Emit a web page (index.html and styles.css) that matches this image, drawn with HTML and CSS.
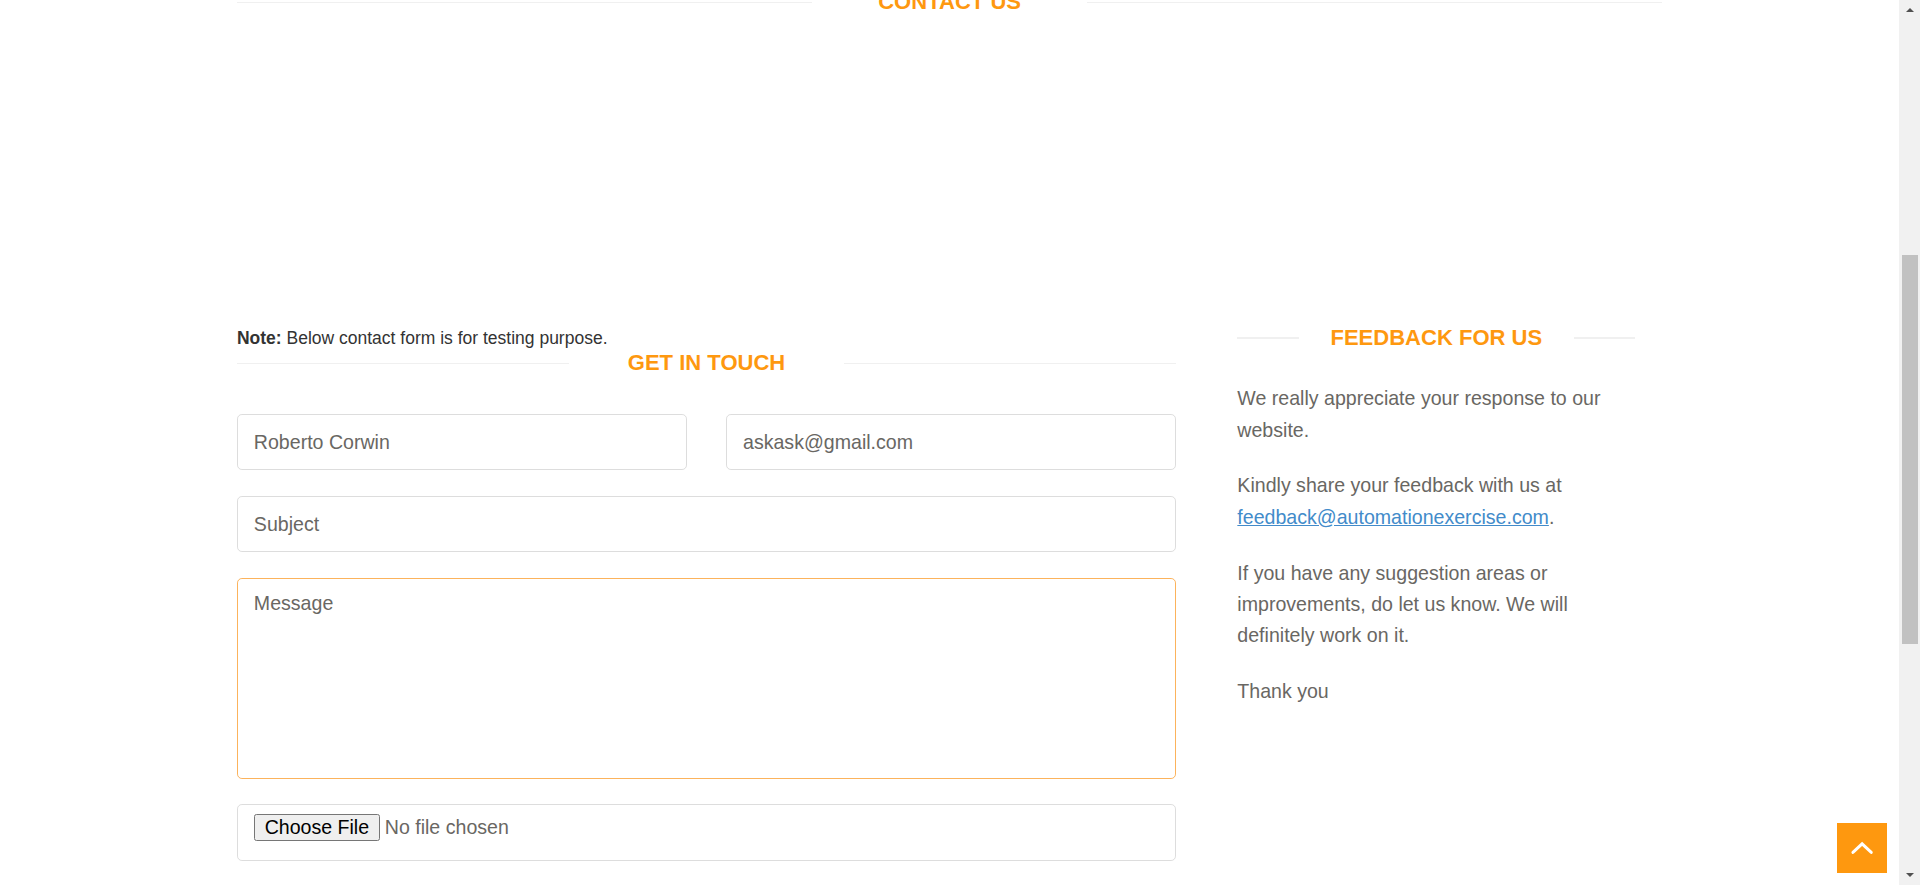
FILE: index.html
```html
<!DOCTYPE html>
<html lang="en">
<head>
<meta charset="utf-8">
<title>Automation Exercise - Contact Us</title>
<link rel="stylesheet" href="styles.css">
</head>
<body>
<div class="screen">
  <main class="page">
    <section class="map-section">
      <h2 class="title title-wide"><span>Contact <strong>Us</strong></span></h2>
      <div class="map"></div>
    </section>

    <div class="container">
      <div class="col-form">
        <p class="note"><strong>Note:</strong> Below contact form is for testing purpose.</p>
        <h2 class="title"><span>Get In Touch</span></h2>
        <form class="contact-form">
          <div class="form-row">
            <input class="field" type="text" name="name" placeholder="Name" value="Roberto Corwin">
            <input class="field" type="email" name="email" placeholder="Email" value="askask@gmail.com">
          </div>
          <input class="field" type="text" name="subject" placeholder="Subject">
          <textarea class="field field-message" name="message" placeholder="Message"></textarea>
          <div class="field field-file">
            <input class="file-input" type="file" name="upload_file">
          </div>
        </form>
      </div>

      <aside class="col-info">
        <h2 class="title"><span>Feedback For Us</span></h2>
        <div class="info-text">
          <p>We really appreciate your response to our website.</p>
          <p>Kindly share your feedback with us at <a href="#">feedback@automationexercise.com</a>.</p>
          <p>If you have any suggestion areas or improvements, do let us know. We will definitely work on it.</p>
          <p>Thank you</p>
        </div>
      </aside>
    </div>
  </main>

  <div class="scrollbar">
    <div class="sb-btn"><span class="sb-arrow-up"></span></div>
    <div class="sb-track"><div class="sb-thumb"></div></div>
    <div class="sb-btn"><span class="sb-arrow-down"></span></div>
  </div>
</div>

<a href="#" class="scroll-up" aria-label="Scroll to top">
  <svg width="41" height="41" viewBox="0 0 41 41" aria-hidden="true">
    <polyline points="13,24 20.5,17 28,24" fill="none" stroke="#ffffff" stroke-width="2.4" stroke-linecap="round" stroke-linejoin="miter"/>
  </svg>
</a>
</body>
</html>
```

FILE: styles.css
```css
html, body {
  margin: 0;
  padding: 0;
  overflow: hidden;
  background: #ffffff;
}

body {
  zoom: 1.2245;
  font-family: "Liberation Sans", Arial, Helvetica, sans-serif;
  color: #696763;
  font-size: 16px;
}

.screen {
  display: flex;
  width: 1568px;
  height: 723px;
  overflow: hidden;
}

.page {
  flex: 1;
  min-width: 0;
  overflow: hidden;
}

/* ---------- titles ---------- */
.title {
  display: grid;
  grid-template-columns: 1fr 225px 1fr;
  align-items: center;
  margin: 0;
  height: 20px;
  line-height: 20px;
  font-size: 18px;
  font-weight: 700;
  color: #FE980F;
  text-transform: uppercase;
}

.title::before,
.title::after {
  content: "";
  height: 1px;
  background: #f0f0f0;
}

.title span {
  text-align: center;
  white-space: nowrap;
}

.title strong {
  font-weight: 700;
}

/* ---------- map / top section ---------- */
.map-section {
  margin-top: -8px;
}

.title-wide {
  width: 1164px;
  margin: 0 auto;
}

.map {
  height: 254px;
}

/* ---------- content row ---------- */
.container {
  width: 1164px;
  margin: 0 auto;
  display: grid;
  grid-template-columns: 767px 325px;
  column-gap: 50px;
  align-items: start;
}

.note {
  margin: 0;
  font-size: 14.3px;
  line-height: 20px;
  color: #333333;
}

.col-form .title {
  margin-top: 1px;
  margin-bottom: 31px;
}

.contact-form {
  display: grid;
  row-gap: 21px;
}

.form-row {
  display: grid;
  grid-template-columns: 1fr 1fr;
  column-gap: 32px;
}

.field {
  display: block;
  box-sizing: border-box;
  width: 100%;
  height: 46px;
  margin: 0;
  padding: 0 13px;
  border: 1px solid #dddddd;
  border-radius: 4px;
  background: #ffffff;
  font-family: "Liberation Sans", Arial, Helvetica, sans-serif;
  font-size: 16px;
  color: #696763;
  outline: none;
}

.field::placeholder {
  color: #696763;
  opacity: 1;
}

.field-message {
  height: 164px;
  padding: 10px 13px 7px;
  line-height: 20px;
  resize: none;
  border-color: #fcb35c;
}

.field-file {
  padding: 7px 13px;
}

.file-input {
  font-family: "Liberation Sans", Arial, Helvetica, sans-serif;
  font-size: 16px;
  color: #696763;
}

.file-input::file-selector-button {
  font-family: "Liberation Sans", Arial, Helvetica, sans-serif;
  font-size: 16px;
  color: #000000;
  background: #efefef;
  border: 1px solid #767676;
  border-radius: 2px;
  padding: 1px 8px;
  margin-right: 4px;
}

/* ---------- feedback column ---------- */
.col-info .title {
  margin-bottom: 27px;
}

.info-text p {
  margin: 0 0 20px;
  font-size: 16px;
  line-height: 25.6px;
  color: #696763;
}

.info-text a {
  color: #428bca;
  text-decoration: underline;
}

/* ---------- fake browser scrollbar ---------- */
.scrollbar {
  width: 17px;
  flex: none;
  display: flex;
  flex-direction: column;
  background: #f1f1f1;
}

.sb-btn {
  height: 17px;
  display: flex;
  align-items: center;
  justify-content: center;
}

.sb-arrow-up {
  width: 0;
  height: 0;
  border-left: 4px solid transparent;
  border-right: 4px solid transparent;
  border-bottom: 4px solid #505050;
}

.sb-arrow-down {
  width: 0;
  height: 0;
  border-left: 4px solid transparent;
  border-right: 4px solid transparent;
  border-top: 4px solid #505050;
}

.sb-track {
  flex: 1;
  padding: 0 2px;
}

.sb-thumb {
  margin-top: 191px;
  height: 318px;
  background: #c1c1c1;
}

/* ---------- scroll-to-top button ---------- */
.scroll-up {
  position: fixed;
  right: 27px;
  bottom: 10px;
  width: 41px;
  height: 41px;
  display: flex;
  background: #FE980F;
}
```
